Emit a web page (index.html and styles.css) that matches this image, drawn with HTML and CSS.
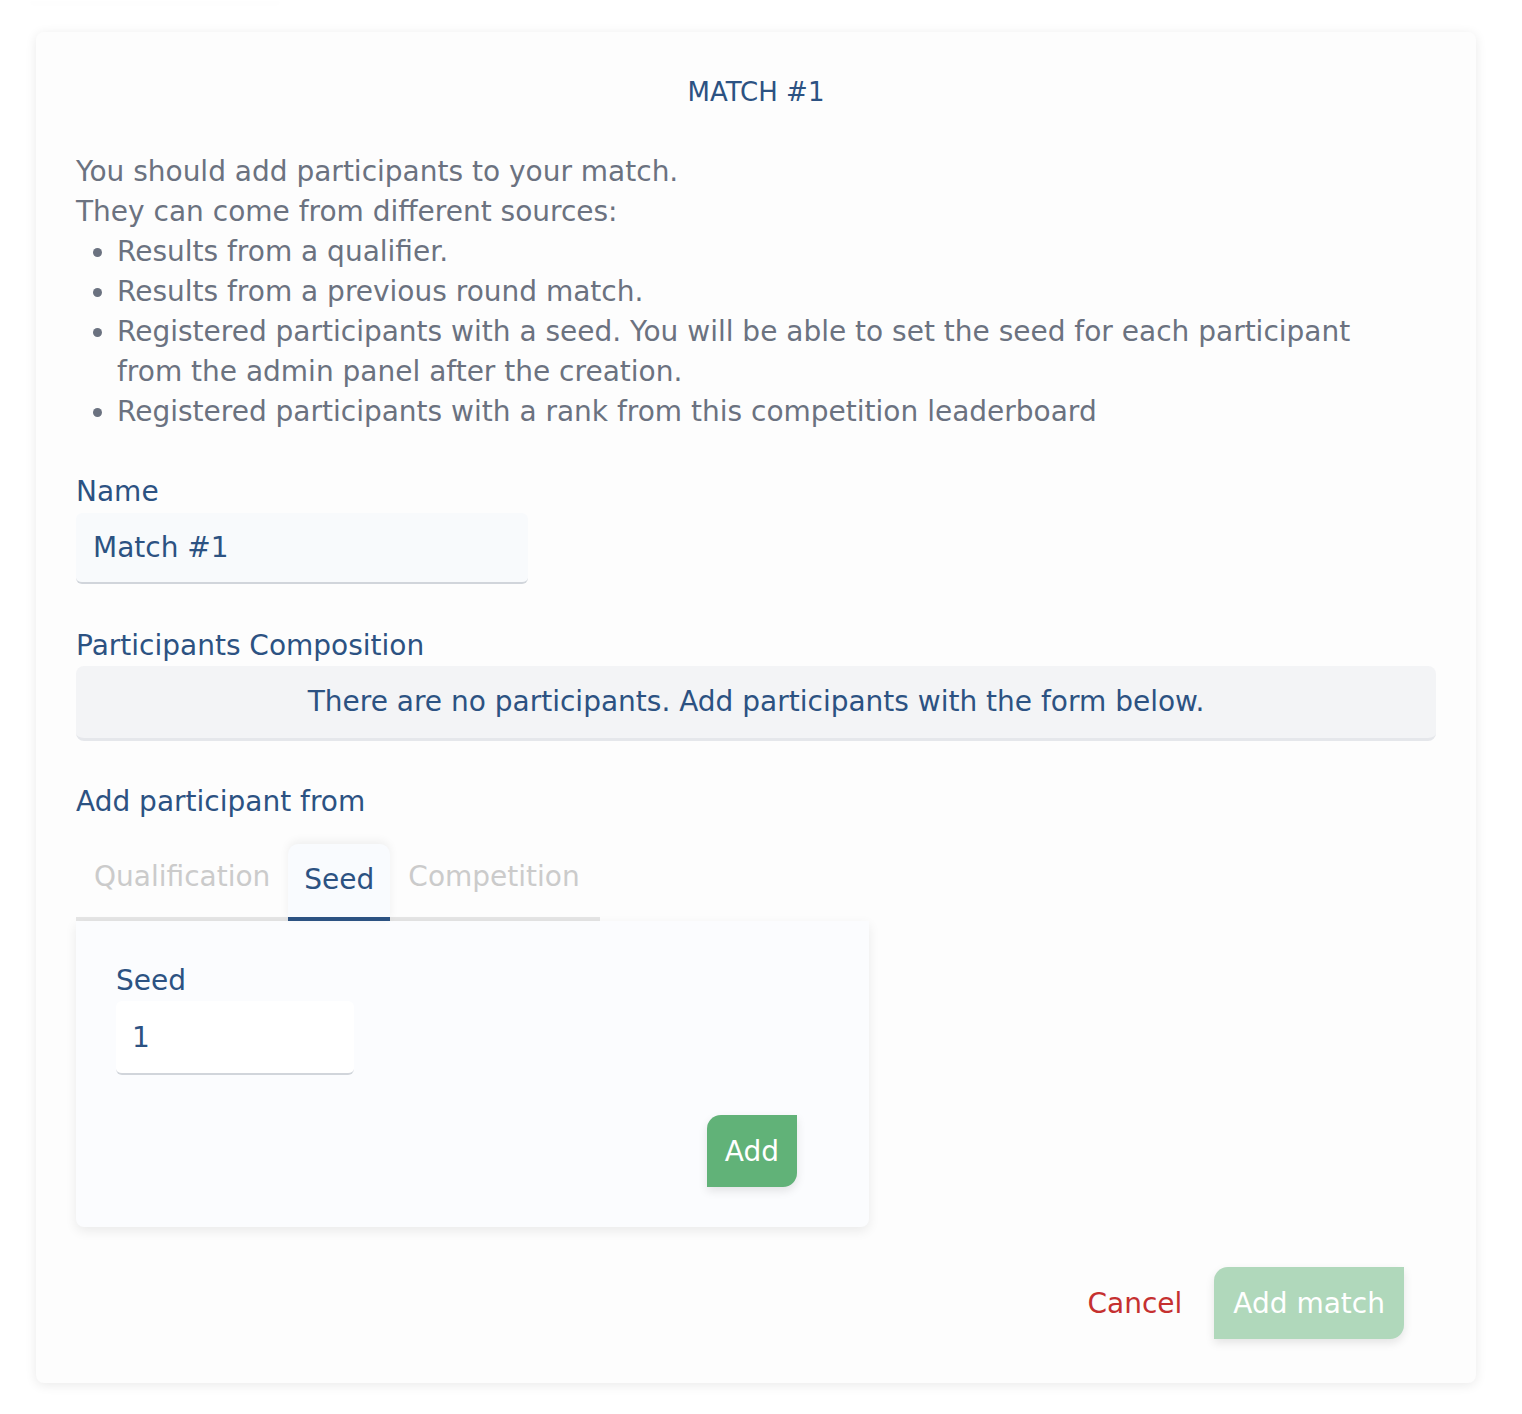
FILE: index.html
```html
<!DOCTYPE html>
<html lang="en">
<head>
<meta charset="utf-8">
<title>Match #1</title>
<link rel="stylesheet" href="styles.css">
</head>
<body>
<div class="ghost"></div>
<div class="card">
  <h1 class="title">MATCH #1</h1>
  <div class="intro">
    <p>You should add participants to your match.</p>
    <p>They can come from different sources:</p>
    <ul>
      <li>Results from a qualifier.</li>
      <li>Results from a previous round match.</li>
      <li>Registered participants with a seed. You will be able to set the seed for each participant from the admin panel after the creation.</li>
      <li>Registered participants with a rank from this competition leaderboard</li>
    </ul>
  </div>

  <label class="label label-name">Name</label>
  <input class="text-input name-input" type="text" value="Match #1">

  <div class="label label-comp">Participants Composition</div>
  <div class="empty">There are no participants. Add participants with the form below.</div>

  <div class="label label-add">Add participant from</div>
  <div class="tabs">
    <div class="tab">Qualification</div>
    <div class="tab active">Seed</div>
    <div class="tab">Competition</div>
  </div>
  <div class="panel">
    <label class="label panel-label">Seed</label>
    <input class="text-input seed-input" type="text" value="1">
    <div class="panel-actions">
      <button class="btn btn-green">Add</button>
    </div>
  </div>

  <div class="footer">
    <button class="btn-link">Cancel</button>
    <button class="btn btn-light">Add match</button>
  </div>
</div>
</body>
</html>
```

FILE: styles.css
```css
* { box-sizing: border-box; }

html, body {
  margin: 0;
  padding: 0;
  background: #ffffff;
}

body {
  font-family: "DejaVu Sans", sans-serif;
  font-size: 28px;
  line-height: 40px;
  color: #6b7280;
}

.ghost {
  width: 250px;
  height: 1px;
  margin-left: 30px;
  box-shadow: 0 2px 6px rgba(0, 0, 0, 0.06);
}

.card {
  width: 1440px;
  margin: 31px 46px 31px 36px;
  padding: 40px 40px 44px;
  background: #fdfdfd;
  border-radius: 8px;
  box-shadow: 0 2px 12px rgba(0, 0, 0, 0.09);
}

.title {
  margin: 0 0 40px;
  font-size: 26px;
  line-height: 40px;
  font-weight: normal;
  text-align: center;
  color: #2c5282;
}

.intro p { margin: 0; }

.intro ul {
  margin: 0;
  padding-left: 41px;
  max-width: 1330px;
}

.label {
  display: block;
  color: #2c5282;
  line-height: 40px;
}

.label-name { margin-top: 40px; }
.label-comp { margin-top: 42px; }
.label-add { margin-top: 41px; }

.text-input {
  display: block;
  border: none;
  border-bottom: 2px solid #d1d5db;
  border-radius: 6px;
  font-family: "DejaVu Sans", sans-serif;
  font-size: 28px;
  color: #2c5282;
  outline: none;
}

.name-input {
  width: 452px;
  height: 71px;
  margin-top: 1px;
  padding: 0 17px;
  background: #f8fafc;
}

.empty {
  padding: 16px 0;
  line-height: 40px;
  text-align: center;
  color: #2c5282;
  background: #f3f4f6;
  border-bottom: 3px solid #e5e7eb;
  border-radius: 8px;
}

.tabs {
  display: flex;
  align-items: flex-end;
  width: 524px;
  height: 84px;
  margin-top: 15px;
  border-bottom: 4px solid #e5e5e5;
}

.tab {
  padding: 20px 18px 20px 18px;
  color: #cbcbcb;
  line-height: 40px;
}

.tab.active {
  position: relative;
  padding: 16px 16px 17px;
  margin-bottom: -4px;
  color: #2c5282;
  background: #f9fbfe;
  border-radius: 10px 10px 0 0;
  border-bottom: 4px solid #2c5282;
  box-shadow: 0 -3px 10px rgba(0, 0, 0, 0.06);
}

.panel {
  width: 793px;
  padding: 40px 72px 40px 40px;
  background: #fbfcfe;
  border-radius: 0 0 8px 8px;
  box-shadow: 0 4px 12px rgba(0, 0, 0, 0.08);
}

.panel-label { line-height: 40px; }

.seed-input {
  width: 238px;
  height: 74px;
  padding: 0 16px;
  background: #ffffff;
}

.panel-actions {
  display: flex;
  justify-content: flex-end;
  margin-top: 40px;
}

.btn {
  height: 72px;
  border: none;
  padding: 0 18px;
  font-family: "DejaVu Sans", sans-serif;
  font-size: 28px;
  color: #ffffff;
  border-radius: 14px 0 14px 0;
  box-shadow: 0 4px 10px rgba(0, 0, 0, 0.1);
}

.btn-green { background: #61b278; }

.btn-light {
  background: #b0d8bb;
  padding: 0 19px;
}

.footer {
  display: flex;
  justify-content: flex-end;
  align-items: center;
  gap: 32px;
  margin-top: 40px;
  padding-right: 32px;
}

.btn-link {
  border: none;
  background: none;
  padding: 0;
  font-family: "DejaVu Sans", sans-serif;
  font-size: 28px;
  color: #c53030;
}
```
